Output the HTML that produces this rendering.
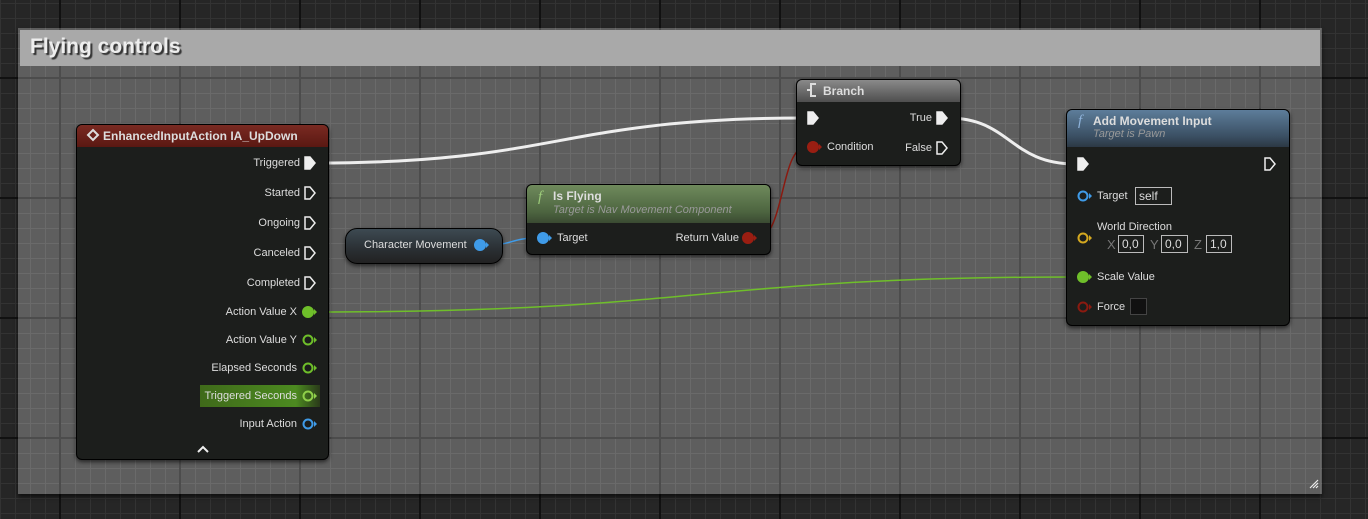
<!DOCTYPE html>
<html><head><meta charset="utf-8"><style>
*{margin:0;padding:0;box-sizing:border-box}
body{width:1368px;height:519px;overflow:hidden;position:relative;font-family:"Liberation Sans",sans-serif;
background-color:#262626;
background-image:
linear-gradient(90deg,#111 0 2px,transparent 2px),
linear-gradient(180deg,#111 0 2px,transparent 2px),
linear-gradient(90deg,#333 0 1px,transparent 1px),
linear-gradient(180deg,#333 0 1px,transparent 1px);
background-size:120px 120px,120px 120px,15px 15px,15px 15px;
background-position:59px 0,0 77px,0 0,0 3px;}
.cm{position:absolute;left:18px;top:28px;width:1304px;height:466px;background-color:#5e5e5e;box-shadow:0 3px 4px rgba(0,0,0,.6);
background-image:
linear-gradient(90deg,#4c4c4c 0 2px,transparent 2px),
linear-gradient(180deg,#4c4c4c 0 2px,transparent 2px),
linear-gradient(90deg,#6a6a6a 0 1px,transparent 1px),
linear-gradient(180deg,#6a6a6a 0 1px,transparent 1px);
background-size:120px 120px,120px 120px,15px 15px,15px 15px;
background-position:41px 0,0 49px,-3px 0,0 -10px;}
.ct{position:absolute;left:2px;top:2px;right:2px;height:36px;background:#a9a9a9;color:#eee;font-weight:bold;font-size:21px;padding:5px 10px;text-shadow:2px 2px 1px #333}
.node{position:absolute;background:#1c1e1c;border:1px solid #000;border-radius:6px;box-shadow:0 2px 4px rgba(0,0,0,.6);overflow:hidden}
.hd{position:absolute;left:0;right:0;top:0;color:#ddd;font-size:12px;font-weight:bold;padding:4px 0 0 26px}
.sub{font-weight:normal;font-style:italic;font-size:11px;color:#999;margin-top:1px}
.t{position:absolute;color:#ddd;font-size:11px;white-space:nowrap}
.r{text-align:right}
.box{position:absolute;border:1px solid #bbb;color:#ddd;font-size:12px;padding:0 3px;height:18px;line-height:16px}
svg{position:absolute;left:0;top:0}
</style></head><body>
<div class="cm"><div class="ct">Flying controls</div></div>
<svg width="1368" height="519">
<path d="M316 163 C560 163 560 118 806 118" stroke="#eee" stroke-width="3" fill="none"/>
<path d="M948 118 C1010 118 1010 164 1075 164" stroke="#eee" stroke-width="3" fill="none"/>
<path d="M316 312 C700 312 700 277 1075 277" stroke="#6fbf2a" stroke-width="1.5" fill="none"/>
<path d="M488 245 C512 245 512 238 537 238" stroke="#3f9be8" stroke-width="1.5" fill="none"/>
<path d="M757 238 C785 238 780 147 806 147" stroke="#8a1a10" stroke-width="1.5" fill="none"/>
</svg>
<div class="node" style="left:76px;top:124px;width:253px;height:336px">
<div class="hd" style="height:22px;background:linear-gradient(180deg,#7a2a22,#5a1812)">EnhancedInputAction IA_UpDown</div>
</div>
<div class="t r" style="right:1068px;top:157px">Triggered</div>
<div class="t r" style="right:1068px;top:187px">Started</div>
<div class="t r" style="right:1068px;top:217px">Ongoing</div>
<div class="t r" style="right:1068px;top:247px">Canceled</div>
<div class="t r" style="right:1068px;top:277px">Completed</div>
<div class="t r" style="right:1071px;top:306px">Action Value X</div>
<div class="t r" style="right:1071px;top:334px">Action Value Y</div>
<div class="t r" style="right:1071px;top:362px">Elapsed Seconds</div>
<div style="position:absolute;left:200px;top:385px;width:120px;height:22px;background:linear-gradient(90deg,#3f6a1a,#4c8a20 80%,#2a3a1a)"></div>
<div class="t r" style="right:1071px;top:390px">Triggered Seconds</div>
<div class="t r" style="right:1071px;top:418px">Input Action</div>
<div class="node" style="left:345px;top:228px;width:158px;height:36px;border-radius:12px;background:linear-gradient(180deg,#3d4a52,#2a2f33 60%,#222)"></div>
<div class="t" style="left:364px;top:239px">Character Movement</div>
<div class="node" style="left:526px;top:184px;width:245px;height:71px">
<div class="hd" style="height:38px;background:linear-gradient(180deg,#6f8a5c,#4d6540 70%,#3a4a32)">Is Flying<div class="sub">Target is Nav Movement Component</div></div>
</div>
<div class="t" style="left:557px;top:232px">Target</div>
<div class="t r" style="right:629px;top:232px">Return Value</div>
<div class="node" style="left:796px;top:79px;width:165px;height:87px">
<div class="hd" style="height:22px;background:linear-gradient(180deg,#8a8a8a,#4e4e4e)">Branch</div>
</div>
<div class="t r" style="right:436px;top:112px">True</div>
<div class="t" style="left:827px;top:141px">Condition</div>
<div class="t r" style="right:436px;top:142px">False</div>
<div class="node" style="left:1066px;top:109px;width:224px;height:217px">
<div class="hd" style="height:37px;background:linear-gradient(180deg,#5d7d9a,#3b5064 70%,#2c3844)">Add Movement Input<div class="sub" style="margin-top:0">Target is Pawn</div></div>
</div>
<div class="t" style="left:1097px;top:190px">Target</div>
<div class="box" style="left:1135px;top:187px;width:37px">self</div>
<div class="t" style="left:1097px;top:221px">World Direction</div>
<div class="t" style="left:1107px;top:237px;color:#777;font-size:13px">X</div>
<div class="box" style="left:1118px;top:235px;width:26px">0,0</div>
<div class="t" style="left:1150px;top:237px;color:#777;font-size:13px">Y</div>
<div class="box" style="left:1161px;top:235px;width:27px">0,0</div>
<div class="t" style="left:1194px;top:237px;color:#777;font-size:13px">Z</div>
<div class="box" style="left:1206px;top:235px;width:26px">1,0</div>
<div class="t" style="left:1097px;top:271px">Scale Value</div>
<div class="t" style="left:1097px;top:301px">Force</div>
<div style="position:absolute;left:1130px;top:298px;width:17px;height:17px;background:#111;border:1px solid #444"></div>
<svg width="1368" height="519">
<defs>
<path id="ex" d="M0 -6 L5 -6 L10 0 L5 6 L0 6 Z"/>
</defs>
<g stroke="#eee" stroke-width="1.5" fill="none">
<use href="#ex" x="305" y="163" fill="#eee"/>
<use href="#ex" x="305" y="193"/><use href="#ex" x="305" y="223"/><use href="#ex" x="305" y="253"/><use href="#ex" x="305" y="283"/>
<use href="#ex" x="808" y="118" fill="#eee"/><use href="#ex" x="937" y="118" fill="#eee"/><use href="#ex" x="937" y="148"/>
<use href="#ex" x="1078" y="164" fill="#eee"/><use href="#ex" x="1265" y="164"/>
</g>
<g stroke-width="2">
<circle cx="308" cy="312" r="5" fill="#6fbf2a" stroke="#6fbf2a"/>
<circle cx="308" cy="340" r="4.5" fill="none" stroke="#6fbf2a"/>
<circle cx="308" cy="368" r="4.5" fill="none" stroke="#6fbf2a"/>
<circle cx="308" cy="396" r="4.5" fill="none" stroke="#8fd04a"/>
<circle cx="308" cy="424" r="4.5" fill="none" stroke="#3f9be8"/>
<circle cx="480" cy="245" r="5" fill="#3f9be8" stroke="#3f9be8"/>
<circle cx="543" cy="238" r="5" fill="#3f9be8" stroke="#3f9be8"/>
<circle cx="748" cy="238" r="5" fill="#9a1e12" stroke="#9a1e12"/>
<circle cx="813" cy="147" r="5" fill="#9a1e12" stroke="#9a1e12"/>
<circle cx="1083" cy="196" r="4.5" fill="none" stroke="#3f9be8"/>
<circle cx="1083" cy="238" r="4.5" fill="none" stroke="#d4a820"/>
<circle cx="1083" cy="277" r="5" fill="#6fbf2a" stroke="#6fbf2a"/>
<circle cx="1083" cy="307" r="4.5" fill="none" stroke="#8a1a10"/>
</g>
<g stroke="none">
<path d="M314 309 l3 3 l-3 3z" fill="#6fbf2a"/><path d="M314 337 l3 3 l-3 3z" fill="#6fbf2a"/><path d="M314 365 l3 3 l-3 3z" fill="#6fbf2a"/><path d="M314 393 l3 3 l-3 3z" fill="#8fd04a"/><path d="M314 421 l3 3 l-3 3z" fill="#3f9be8"/>
<path d="M486 242 l3 3 l-3 3z" fill="#3f9be8"/><path d="M549 235 l3 3 l-3 3z" fill="#3f9be8"/><path d="M754 235 l3 3 l-3 3z" fill="#9a1e12"/><path d="M819 144 l3 3 l-3 3z" fill="#9a1e12"/>
<path d="M1089 193 l3 3 l-3 3z" fill="#3f9be8"/><path d="M1089 235 l3 3 l-3 3z" fill="#d4a820"/><path d="M1089 274 l3 3 l-3 3z" fill="#6fbf2a"/><path d="M1089 304 l3 3 l-3 3z" fill="#8a1a10"/>
</g>
<path d="M198 452 L203 447 L208 452" stroke="#eee" stroke-width="2" fill="none"/>
<path d="M93 130 L98 135 L93 140 L88 135 Z" fill="none" stroke="#ddd" stroke-width="2"/>
<path d="M816 84 h-5 v12 h5 M811 90 h-4" stroke="#ddd" stroke-width="2" fill="none"/>
<g fill="#9ccb7a" font-family="Liberation Serif" font-style="italic" font-size="15"><text x="538" y="201">f</text></g>
<g fill="#8fb4dc" font-family="Liberation Serif" font-style="italic" font-size="15"><text x="1078" y="125">f</text></g>
<path d="M1310 488 L1318 480 M1313 488 L1318 483 M1316 488 L1318 486" stroke="#eee" stroke-width="1.2"/>
</svg>
</body></html>
